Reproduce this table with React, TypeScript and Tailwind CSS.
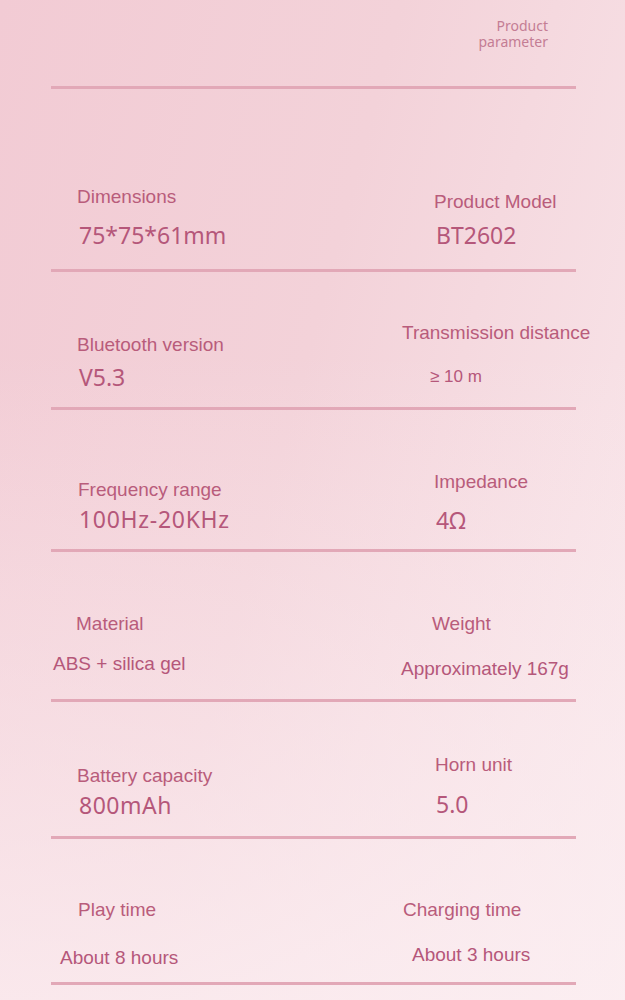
import React from "react";

const label = "block text-[19px] leading-[19px] text-[#b95c7b] whitespace-nowrap";
const value = "block text-[23px] leading-[23px] text-[#b5577a] whitespace-nowrap font-['Noto_Sans',sans-serif]";
const valueArial = "block text-[19px] leading-[19px] text-[#b5577a] whitespace-nowrap";

function Line() {
  return <div className="h-[3px] w-[525px] bg-[#e2a8b7]" />;
}

export default function App() {
  return (
    <div className="w-[625px] h-[1000px] overflow-hidden bg-[linear-gradient(to_bottom,rgba(252,240,243,0)_35%,rgba(252,240,243,0.75)_100%),linear-gradient(105deg,#f2cbd4_0%,#f3d2d9_45%,#f7e0e5_80%,#f9e7eb_100%)] font-['Liberation_Sans',Arial,sans-serif]">
      <div className="ml-[51px] w-[525px]">
        {/* Header */}
        <div className="h-[86px] pt-[19px] pr-[28px] flex justify-end">
          <div className="text-right text-[14px] leading-[14px] text-[#c47d94] font-['Noto_Sans',sans-serif] flex flex-col gap-[2px]">
            <span>Product</span>
            <span>parameter</span>
          </div>
        </div>
        <Line />

        {/* Row 1 */}
        <div className="flex h-[180px]">
          <div className="w-[350px] shrink-0">
            <span className={`${label} mt-[98px] ml-[26px]`}>Dimensions</span>
            <span className={`${value} mt-[18px] ml-[28px]`}>75*75*61mm</span>
          </div>
          <div className="flex-1 min-w-0">
            <span className={`${label} mt-[103px] ml-[33px]`}>Product Model</span>
            <span className={`${value} mt-[13px] ml-[35px]`}>BT2602</span>
          </div>
        </div>
        <Line />

        {/* Row 2 */}
        <div className="flex h-[135px]">
          <div className="w-[350px] shrink-0">
            <span className={`${label} mt-[63px] ml-[26px]`}>Bluetooth version</span>
            <span className={`${value} mt-[12px] ml-[28px]`}>V5.3</span>
          </div>
          <div className="flex-1 min-w-0">
            <span className={`${label} mt-[51px] ml-[1px]`}>Transmission distance</span>
            <span className="block text-[17px] leading-[17px] text-[#b5577a] mt-[26px] ml-[29px] whitespace-nowrap">≥ 10 m</span>
          </div>
        </div>
        <Line />

        {/* Row 3 */}
        <div className="flex h-[139px]">
          <div className="w-[350px] shrink-0">
            <span className={`${label} mt-[70px] ml-[27px]`}>Frequency range</span>
            <span className={`${value} mt-[9px] ml-[28px] tracking-[0.7px]`}>100Hz-20KHz</span>
          </div>
          <div className="flex-1 min-w-0">
            <span className={`${label} mt-[62px] ml-[33px]`}>Impedance</span>
            <span className={`${value} mt-[18px] ml-[35px]`}>4Ω</span>
          </div>
        </div>
        <Line />

        {/* Row 4 */}
        <div className="flex h-[147px]">
          <div className="w-[350px] shrink-0">
            <span className={`${label} mt-[62px] ml-[25px]`}>Material</span>
            <span className={`${valueArial} mt-[21px] ml-[2px]`}>ABS + silica gel</span>
          </div>
          <div className="flex-1 min-w-0">
            <span className={`${label} mt-[62px] ml-[31px]`}>Weight</span>
            <span className={`${valueArial} mt-[26px] ml-0`}>Approximately 167g</span>
          </div>
        </div>
        <Line />

        {/* Row 5 */}
        <div className="flex h-[134px]">
          <div className="w-[350px] shrink-0">
            <span className={`${label} mt-[64px] ml-[26px]`}>Battery capacity</span>
            <span className={`${value} mt-[9px] ml-[28px] tracking-[0.5px]`}>800mAh</span>
          </div>
          <div className="flex-1 min-w-0">
            <span className={`${label} mt-[53px] ml-[34px]`}>Horn unit</span>
            <span className={`${value} mt-[19px] ml-[35px]`}>5.0</span>
          </div>
        </div>
        <Line />

        {/* Row 6 */}
        <div className="flex h-[143px]">
          <div className="w-[350px] shrink-0">
            <span className={`${label} mt-[61px] ml-[27px]`}>Play time</span>
            <span className={`${valueArial} mt-[29px] ml-[9px]`}>About 8 hours</span>
          </div>
          <div className="flex-1 min-w-0">
            <span className={`${label} mt-[61px] ml-[2px]`}>Charging time</span>
            <span className={`${valueArial} mt-[26px] ml-[11px]`}>About 3 hours</span>
          </div>
        </div>
        <Line />
      </div>
    </div>
  );
}
